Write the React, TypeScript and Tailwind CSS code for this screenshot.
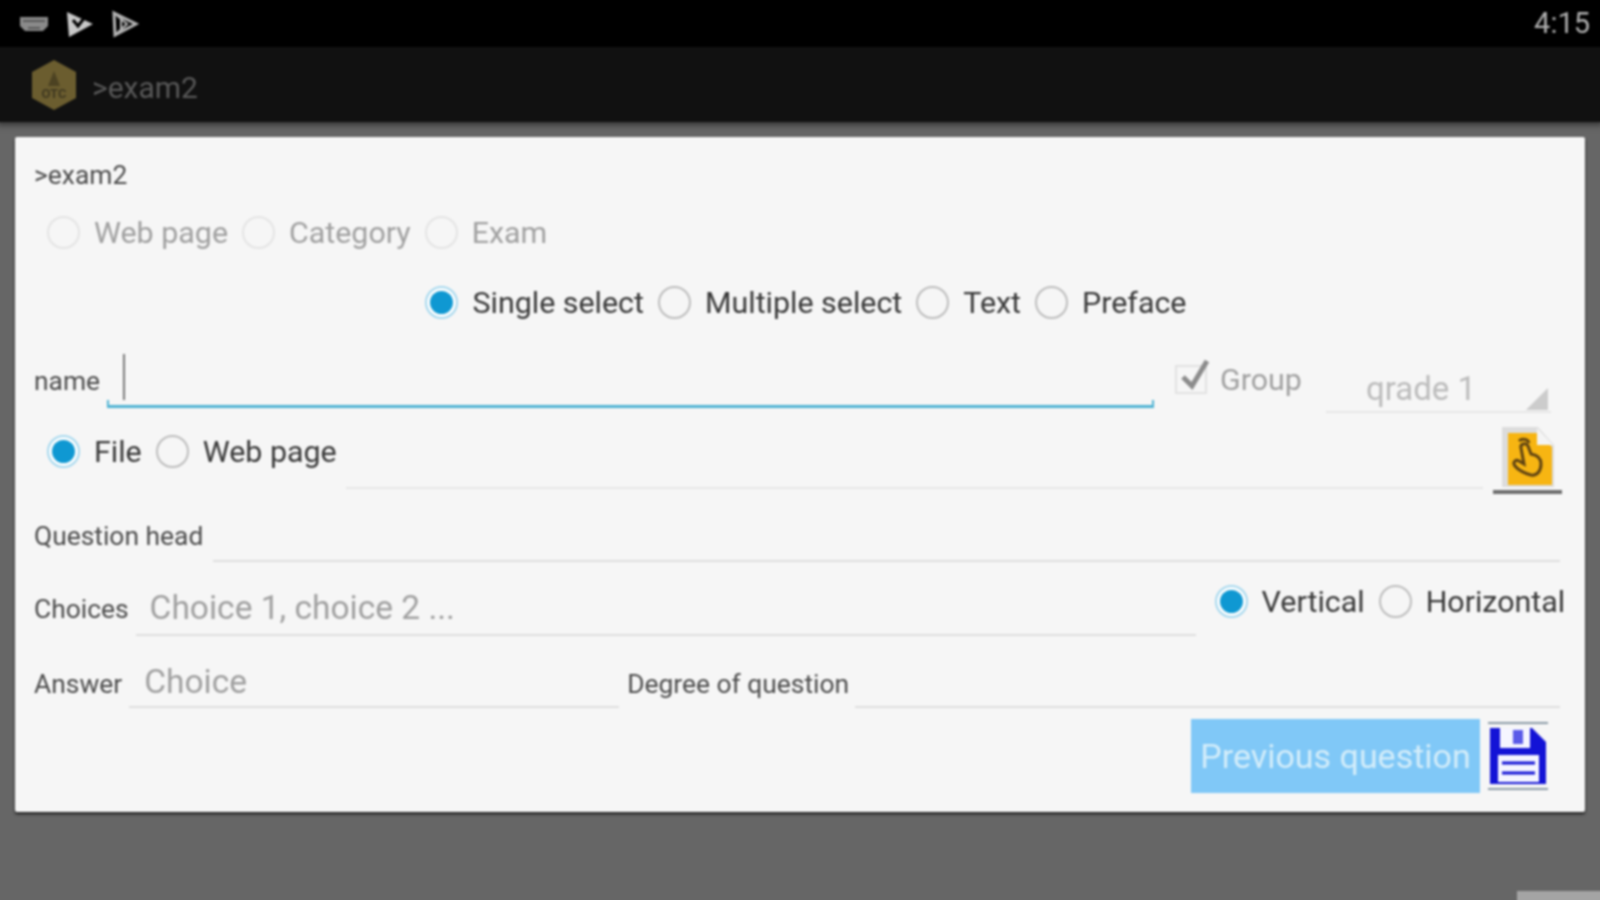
const Radio = ({ label, checked, muted }: { label: string; checked?: boolean; muted?: boolean }) => {
  return (
    <div className="flex items-center gap-[14px]">
      {checked ? (
        <span className="flex h-[33px] w-[33px] items-center justify-center rounded-full border-2 border-[#a5d8ee] bg-white">
          <span className="h-[23px] w-[23px] rounded-full bg-[#0f98d2]" />
        </span>
      ) : (
        <span
          className={
            muted
              ? "h-[33px] w-[33px] rounded-full border-2 border-[#e4e4e4]"
              : "h-[33px] w-[33px] rounded-full border-2 border-[#bdbdbd]"
          }
        />
      )}
      <span className={muted ? "text-[30.4px] text-[#a0a0a0]" : "text-[30.4px] text-[#383838]"}>{label}</span>
    </div>
  );
};

const Field = ({ className, color }: { className: string; color?: string }) => {
  return <div className={`h-[2px] ${color ?? "bg-[#dedede]"} ${className}`} />;
};

const Label = ({ text }: { text: string }) => {
  return <span className="text-[26.4px] text-[#4c4c4c]">{text}</span>;
};

const StatusIcons = () => {
  return (
    <div className="flex items-center gap-[17px]">
      <svg width="30" height="16" viewBox="0 0 30 16" fill="#8a8a8a">
        <path d="M1 1h28v9l-5 5H6l-5-5z" />
        <path d="M4 5h22M9 12h12" stroke="#4a4a4a" strokeWidth="1.5" />
      </svg>
      <svg width="28" height="28" viewBox="0 0 28 28" fill="#c8c8c8">
        <path d="M1 2l26 12L3 27z" />
        <path d="M7 10l5 6 10-13" stroke="#000000" strokeWidth="3" fill="none" />
      </svg>
      <svg width="28" height="28" viewBox="0 0 28 28" fill="none" stroke="#b4b4b4" strokeWidth="3">
        <path d="M3 3l22 11L4 25z" />
        <path d="M10 8v12M4 25l12-11L3 3" strokeWidth="2" />
      </svg>
    </div>
  );
};

const Logo = () => {
  return (
    <svg width="46" height="50" viewBox="0 0 46 50">
      <path d="M23 0l22 12v26L23 50 1 38V12z" fill="#6b5d2f" />
      <path d="M23 11l6 15H17z" fill="#4c4222" />
      <text x="23" y="38" textAnchor="middle" fontSize="13" fontWeight="700" fill="#3f3820" fontFamily="Roboto, sans-serif">
        OTC
      </text>
    </svg>
  );
};

const FilePick = () => {
  return (
    <div className="flex flex-col items-center">
      <svg width="54" height="61" viewBox="0 0 54 61">
        <path d="M1 1h36l16 18v42H1z" fill="#dcdcdc" />
        <path d="M7 7h29l15 14v38H7z" fill="#f7b512" />
        <path d="M36 2v17h16z" fill="#f4f4f4" />
        <path
          d="M18 15c3-3 9-2 10 2M20 22c-1-4 5-6 7-2l3 8c6 1 10 4 10 10 0 7-4 12-10 11-5-1-13-5-16-9-3-4 1-7 4-5l5 3z"
          fill="none"
          stroke="#5f4312"
          strokeWidth="3"
        />
      </svg>
      <div className="mt-[3px] h-[4px] w-[69px] bg-[#6e6e6e]" />
    </div>
  );
};

const SaveIcon = () => {
  return (
    <div className="flex h-[68px] w-[60px] flex-col justify-between">
      <div className="h-[2px] bg-[#8a9aa5]" />
      <svg width="60" height="60" viewBox="0 0 60 60">
        <path d="M2 2h42l14 14v42H2z" fill="#1313d6" />
        <rect x="12" y="2" width="30" height="20" fill="#f5f5ff" />
        <rect x="25" y="4" width="10" height="14" fill="#5a5ae8" />
        <rect x="10" y="29" width="41" height="27" fill="#f5f5ff" />
        <path d="M14 37h33M14 47h33" stroke="#1313d6" strokeWidth="3" />
      </svg>
      <div className="h-[2px] bg-[#8a9aa5]" />
    </div>
  );
};

const App = () => {
  return (
    <div className="h-[900px] w-[1600px] overflow-hidden bg-[#666666]">
      {/* 3px bleed on every side so the blur does not fade at the window edge */}
      <div className="relative ml-[-3px] mt-[-3px] flex h-[906px] w-[1606px] flex-col bg-[#666666] font-['Roboto',sans-serif] blur-[0.8px]">
        <div className="flex h-[50px] items-center justify-between bg-black pl-[22px] pr-[13px] pt-[3px]">
          <StatusIcons />
          <span className="text-[29px] text-[#b0b0b0]">4:15</span>
        </div>
        <div className="flex h-[75px] items-center gap-[15px] bg-[#111111] pl-[34px] shadow-[0_3px_6px_rgba(0,0,0,0.5)]">
          <Logo />
          <span className="pt-[5px] text-[30px] text-[#585858]">&gt;exam2</span>
        </div>

        <div className="ml-[18px] mr-[18px] mt-[15px] flex h-[675px] flex-col rounded-[2px] bg-[#f6f6f6] pt-[13px] shadow-[0_2px_3px_rgba(0,0,0,0.75)]">
          <div className="flex h-[50px] items-center pl-[19px] pt-[2px]">
            <Label text=">exam2" />
          </div>

          <div className="flex h-[64px] items-center gap-[14px] pl-[32px] pt-[2px]">
            <Radio label="Web page" muted />
            <Radio label="Category" muted />
            <Radio label="Exam" muted />
          </div>

          <div className="flex h-[76px] items-center justify-center gap-[14px] pl-[12px] pt-[1px]">
            <Radio label="Single select" checked />
            <Radio label="Multiple select" />
            <Radio label="Text" />
            <Radio label="Preface" />
          </div>

          <div className="flex h-[80px] items-center pl-[19px]">
            <span className="pt-[3px]">
              <Label text="name" />
            </span>
            <div className="relative ml-[7px] h-[60px] w-[1047px] self-end">
              <div className="absolute left-[16px] top-[-6px] h-[46px] w-[2px] bg-[#777777]" />
              <div className="absolute bottom-[12px] h-[3px] w-full bg-[#4fb3d3]" />
              <div className="absolute bottom-[12px] left-0 h-[8px] w-[2px] bg-[#4fb3d3]" />
              <div className="absolute bottom-[12px] right-0 h-[8px] w-[2px] bg-[#4fb3d3]" />
            </div>
            <div className="ml-[21px] flex items-center gap-[13px]">
              <div className="relative h-[29px] w-[32px] border-2 border-[#e2e2e2]">
                <svg className="absolute left-[2px] top-[-10px]" width="32" height="34" viewBox="0 0 32 34">
                  <path d="M4 20l9 9L28 4" fill="none" stroke="#8c8c8c" strokeWidth="5" />
                </svg>
              </div>
              <span className="text-[30.4px] text-[#a0a0a0]">Group</span>
            </div>
            <div className="relative mb-[7px] ml-[24px] flex h-[54px] w-[225px] items-center self-end border-b-2 border-[#e6e6e6] pl-[40px] pt-[8px]">
              <span className="text-[33px] text-[#bcbcbc]">qrade 1</span>
              <div className="absolute bottom-[1px] right-[3px] h-[22px] w-[22px] bg-[#cccccc] [clip-path:polygon(100%_0,100%_100%,0_100%)]" />
            </div>
          </div>

          <div className="relative flex h-[77px] items-center gap-[14px] pb-[13px] pl-[32px]">
            <Radio label="File" checked />
            <Radio label="Web page" />
            <Field className="absolute bottom-[8px] left-[331px] w-[1137px]" color="bg-[#e6e6e6]" />
            <div className="absolute bottom-[3px] right-[23px]">
              <FilePick />
            </div>
          </div>

          <div className="relative flex h-[75px] items-center pl-[19px] pt-[4px]">
            <Label text="Question head" />
            <Field className="absolute bottom-[10px] left-[198px] w-[1347px]" />
          </div>

          <div className="relative flex h-[72px] items-center pl-[19px]">
            <span className="pt-[4px]">
              <Label text="Choices" />
            </span>
            <div className="mb-[8px] ml-[7px] flex h-[62px] w-[1060px] items-center self-end border-b-2 border-[#dedede] pl-[14px] pt-[9px]">
              <span className="text-[33.5px] text-[#a0a0a0]">Choice 1, choice 2 ...</span>
            </div>
            <div className="mb-[13px] ml-[19px] flex items-center gap-[14px]">
              <Radio label="Vertical" checked />
              <Radio label="Horizontal" />
            </div>
          </div>

          <div className="relative flex h-[72px] items-center pl-[19px]">
            <span className="pt-[9px]">
              <Label text="Answer" />
            </span>
            <div className="mb-[8px] ml-[7px] flex h-[60px] w-[490px] items-center self-end border-b-2 border-[#dedede] pl-[15px] pt-[10px]">
              <span className="text-[33.5px] text-[#a0a0a0]">Choice</span>
            </div>
            <span className="ml-[8px] pt-[9px]">
              <Label text="Degree of question" />
            </span>
            <Field className="absolute bottom-[8px] left-[840px] w-[705px]" />
          </div>

          <div className="flex h-[80px] items-center justify-end gap-[8px] pr-[37px]">
            <div className="flex h-[74px] w-[289px] items-center justify-center bg-[#80c8f7]">
              <span className="text-[34px] text-[#d3edfa]">Previous question</span>
            </div>
            <SaveIcon />
          </div>
        </div>

        <div className="absolute bottom-0 right-0 h-[12px] w-[86px] bg-[#a4a4a4]" />
      </div>
    </div>
  );
};

export default App;
